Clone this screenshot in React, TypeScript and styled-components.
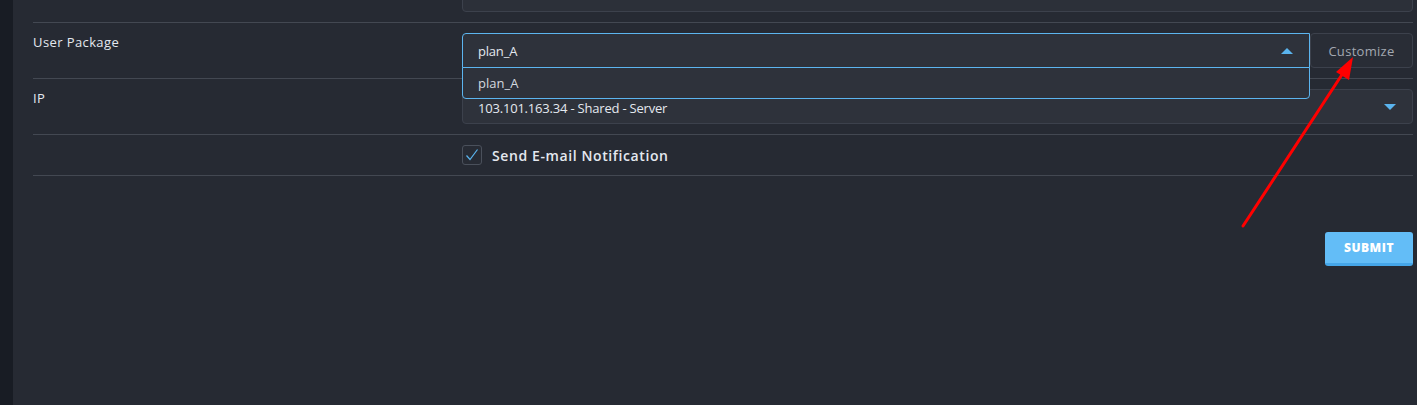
import React from "react";
import styled, { createGlobalStyle } from "styled-components";

const Global = createGlobalStyle`
  html, body { margin: 0; padding: 0; background: #262a33; }
  body { font-family: "Open Sans", "Noto Sans", sans-serif; color: #e1e5ec; }
  * { box-sizing: border-box; }
`;

const Page = styled.div`
  display: flex;
  height: 405px;
  overflow: hidden;
  position: relative;
`;

const Sidebar = styled.div`
  width: 13px;
  flex: none;
  background: #181c24;
`;

const Main = styled.div`
  flex: 1;
  padding: 0 4px 0 20px;
  display: flex;
  flex-direction: column;
`;

const Row = styled.div`
  display: grid;
  grid-template-columns: 429px 1fr;
  padding: 10px 0;
  border-bottom: 1px solid #434852;
  position: relative;
`;

const TopRow = styled.div`
  display: grid;
  grid-template-columns: 429px 1fr;
  height: 23px;
  border-bottom: 1px solid #434852;
  overflow: hidden;
`;

const PartialInput = styled.div`
  height: 31px;
  margin-top: -19px;
  border: 1px solid #3c414c;
  border-radius: 4px;
  background: #2c3039;
`;

const Label = styled.div`
  font-size: 13px;
  line-height: 18px;
  font-weight: 500;
  letter-spacing: 0.4px;
  color: #e4e8ef;
`;

const FieldWrap = styled.div`
  display: flex;
  position: relative;
`;

const Select = styled.div<{ $open?: boolean }>`
  flex: 1;
  height: 35px;
  display: flex;
  align-items: center;
  justify-content: space-between;
  padding: 0 16px 0 15px;
  background: #2e323b;
  border: 1px solid ${(p) => (p.$open ? "#5cb5ef" : "#3c414c")};
  border-radius: ${(p) => (p.$open ? "4px 0 0 0" : "4px")};
  font-size: 13px;
  letter-spacing: -0.2px;
  color: #e4e8ef;
`;

const SelectText = styled.span<{ $shift?: number }>`
  padding-top: ${(p) => p.$shift ?? 0}px;
`;

const Caret = styled.span<{ $up?: boolean }>`
  width: 0;
  height: 0;
  border-left: 6px solid transparent;
  border-right: 6px solid transparent;
  ${(p) =>
    p.$up
      ? "border-bottom: 6px solid #5ab4ee;"
      : "border-top: 6px solid #5ab4ee;"}
`;

const Menu = styled.div`
  position: absolute;
  left: 0;
  top: 34px;
  width: 848px;
  height: 32px;
  background: #2e323b;
  border: 1px solid #5cb5ef;
  border-radius: 0 0 4px 4px;
  display: flex;
  align-items: center;
  padding-left: 15px;
  font-size: 13px;
  color: #d4d8df;
  z-index: 2;
`;

const CustomizeBtn = styled.button`
  width: 103px;
  height: 35px;
  padding: 0;
  background: #292d36;
  border: 1px solid #3c414c;
  border-radius: 4px;
  color: #a3a8b1;
  font-family: inherit;
  font-size: 13px;
  letter-spacing: 0.3px;
`;

const CheckLine = styled.label`
  display: flex;
  align-items: center;
  gap: 10px;
  font-size: 14px;
  font-weight: 600;
  letter-spacing: 0.6px;
  color: #e4e8ef;
`;

const Box = styled.span`
  width: 20px;
  height: 20px;
  border: 1px solid #4a505b;
  border-radius: 3px;
  display: flex;
  align-items: center;
  justify-content: center;
  background: #272b34;
`;

const Actions = styled.div`
  display: flex;
  justify-content: flex-end;
  padding-top: 56px;
`;

const SubmitBtn = styled.button`
  width: 88px;
  height: 34px;
  background: #63bdf7;
  border: none;
  border-bottom: 3px solid #45a6e9;
  border-radius: 3px;
  color: #ffffff;
  font-family: inherit;
  font-weight: 800;
  font-size: 12px;
  letter-spacing: 0.5px;
`;

const Arrow = styled.svg`
  position: absolute;
  left: 0;
  top: 0;
  pointer-events: none;
`;

export default function App() {
  return (
    <>
      <Global />
      <Page>
        <Sidebar />
        <Main>
          <TopRow>
            <div />
            <PartialInput />
          </TopRow>
          <Row>
            <Label>User Package</Label>
            <FieldWrap>
              <Select $open>
                <SelectText>plan_A</SelectText>
                <Caret $up />
              </Select>
              <CustomizeBtn>Customize</CustomizeBtn>
              <Menu>plan_A</Menu>
            </FieldWrap>
          </Row>
          <Row>
            <Label>IP</Label>
            <FieldWrap>
              <Select>
                <SelectText $shift={2}>103.101.163.34 - Shared - Server</SelectText>
                <Caret />
              </Select>
            </FieldWrap>
          </Row>
          <Row>
            <div />
            <CheckLine>
              <Box>
                <svg width="14" height="14" viewBox="0 0 14 14">
                  <path d="M1.5 7.5 L5 11.5 L12.5 1.5" fill="none" stroke="#5ab4ee" strokeWidth="1.2" />
                </svg>
              </Box>
              Send E-mail Notification
            </CheckLine>
          </Row>
          <Actions>
            <SubmitBtn>SUBMIT</SubmitBtn>
          </Actions>
        </Main>
        <Arrow width="1417" height="405">
          <line x1="1243" y1="226" x2="1345" y2="70" stroke="#ff0000" strokeWidth="3" strokeLinecap="round" />
          <polygon points="1353,57 1349,80 1336,72" fill="#ff0000" />
        </Arrow>
      </Page>
    </>
  );
}
